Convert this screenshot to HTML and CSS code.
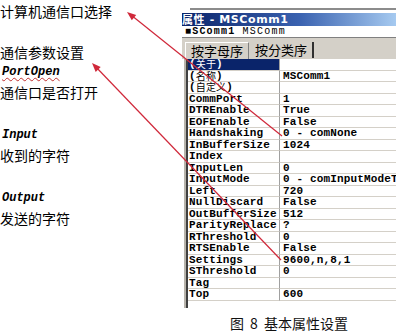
FILE: index.html
```html
<!DOCTYPE html>
<html lang="zh-CN">
<head>
    <meta charset="UTF-8">
    <meta name="viewport" content="width=device-width, initial-scale=1.0">
    <title>MSComm 基本属性设置</title>
    <link rel="stylesheet" href="styles.css">
</head>
<body>
    <div class="page">
        <!-- Notes on the left -->
        <div class="notes">
            <p class="cn first">计算机通信口选择</p>
            <div class="group">
                <p class="cn">通信参数设置</p>
                <p class="en spell">PortOpen</p>
                <p class="cn">通信口是否打开</p>
            </div>
            <div class="group">
                <p class="en">Input</p>
                <p class="cn">收到的字符</p>
            </div>
            <div class="group">
                <p class="en">Output</p>
                <p class="cn">发送的字符</p>
            </div>
        </div>

        <!-- Properties window (screenshot) -->
        <div class="panel">
            <div class="frame-top"></div>
            <div class="titlebar"><span class="title-cjk">属性</span> - MSComm1</div>
            <div class="objname"><b>■SComm1</b> MSComm</div>
            <div class="tabs">
                <span class="tab active">按字母序</span>
                <span class="tab last">按分类序</span>
            </div>
            <div class="grid">
                <div class="name selected">(<span class="cjk">关于</span>)</div><div class="value"></div>
                <div class="name">(<span class="cjk">名称</span>)</div><div class="value">MSComm1</div>
                <div class="name">(<span class="cjk">自定义</span>)</div><div class="value"></div>
                <div class="name">CommPort</div><div class="value">1</div>
                <div class="name">DTREnable</div><div class="value">True</div>
                <div class="name">EOFEnable</div><div class="value">False</div>
                <div class="name">Handshaking</div><div class="value">0 - comNone</div>
                <div class="name">InBufferSize</div><div class="value">1024</div>
                <div class="name">Index</div><div class="value"></div>
                <div class="name">InputLen</div><div class="value">0</div>
                <div class="name">InputMode</div><div class="value">0 - comInputModeText</div>
                <div class="name">Left</div><div class="value">720</div>
                <div class="name">NullDiscard</div><div class="value">False</div>
                <div class="name">OutBufferSize</div><div class="value">512</div>
                <div class="name">ParityReplace</div><div class="value">?</div>
                <div class="name">RThreshold</div><div class="value">0</div>
                <div class="name">RTSEnable</div><div class="value">False</div>
                <div class="name">Settings</div><div class="value">9600,n,8,1</div>
                <div class="name">SThreshold</div><div class="value">0</div>
                <div class="name">Tag</div><div class="value"></div>
                <div class="name">Top</div><div class="value">600</div>
            </div>
            <p class="caption">图 8 基本属性设置</p>
        </div>

        <!-- red arrows drawn over everything -->
        <svg class="arrows" width="396" height="333" viewBox="0 0 396 333">
            <line x1="282" y1="136" x2="131" y2="15" />
            <polygon points="127,12 136.2,14.9 131.8,20.3" />
            <line x1="281" y1="260" x2="95" y2="66" />
            <polygon points="92,63 100.7,67.1 95.7,71.9" />
        </svg>
    </div>
</body>
</html>
```

FILE: styles.css
```css
body {
    margin: 0;
    background-color: white;
    color: #000;
    font-family: "Noto Sans CJK SC", sans-serif;
    overflow: hidden;
}

.page {
    position: relative;
    display: flex;
    width: 396px;
    height: 333px;
    overflow: hidden;
}

/* left notes */
.notes {
    width: 181px;
    flex-shrink: 0;
}

.notes p {
    margin: 0;
    line-height: 20px;
    white-space: nowrap;
}

.cn {
    font-size: 14px;
}

.first {
    margin-top: 1px !important;
}

.group {
    margin-top: 21px;
}

.group + .group {
    margin-top: 23px;
}

.en {
    font-family: "Liberation Mono", monospace;
    font-size: 12px;
    font-weight: bold;
    font-style: italic;
    padding-left: 2px;
}

.spell {
    text-decoration: underline wavy #c03030 1px;
    text-underline-offset: 2px;
}

/* properties window */
.panel {
    flex: 1;
    overflow: hidden;
    padding-left: 1px;
}

.frame-top {
    height: 8px;
    margin-left: 8px;
    border-bottom: 2px solid #8c8c8c;
    margin-bottom: 3px;
}

.titlebar {
    height: 13px;
    line-height: 13px;
    background: linear-gradient(to right, #0a246a, #3a62b0 55%, #a6caf0);
    color: white;
    font-family: "DejaVu Sans", sans-serif;
    font-size: 11px;
    font-weight: bold;
    letter-spacing: 0.6px;
    white-space: nowrap;
    overflow: hidden;
}

.title-cjk {
    font-family: "Noto Sans CJK SC", sans-serif;
    font-size: 11px;
    display: inline-block;
    height: 13px;
    line-height: 13px;
    vertical-align: top;
}

.objname {
    height: 11px;
    line-height: 11px;
    font-family: "Liberation Mono", monospace;
    font-size: 10px;
    letter-spacing: 1.2px;
    padding-left: 3px;
    white-space: nowrap;
}

.tabs {
    border-top: 1px solid #808080;
    background-color: #d4d0c8;
    padding: 4px 0 0 3px;
    box-sizing: border-box;
    display: flex;
    align-items: flex-start;
    height: 22px;
}

.tab {
    font-size: 13px;
    line-height: 16px;
    height: 16px;
    padding: 0 5px;
    border-right: 1px solid #808080;
    border-left: 1px solid #d4d0c8;
}

.tab.active {
    border-left: 1px solid white;
    border-top: 1px solid white;
    line-height: 15px;
}

.tab.last {
    border-right: 2px solid #303030;
}

.grid {
    display: grid;
    grid-template-columns: 92px 1fr;
    grid-auto-rows: 11.5px;
    margin-left: 4px;
    border-left: 2px solid #404040;
    box-shadow: -2px 0 0 #b8b4ac;
    padding-bottom: 7px;
    font-family: "Liberation Mono", monospace;
    font-size: 11px;
    font-weight: bold;
    letter-spacing: 0.15px;
}

.name,
.value {
    box-sizing: border-box;
    border-bottom: 1px solid #d4d0c8;
    line-height: 10.5px;
    white-space: nowrap;
    overflow: hidden;
}

.name {
    padding-left: 1px;
    border-right: 1px solid #a0a0a0;
}

.value {
    padding-left: 3px;
}

.name.selected {
    background-color: #0a246a;
    color: white;
}

.cjk {
    display: inline-block;
    height: 10px;
    line-height: 10px;
    vertical-align: top;
    font-family: "Noto Sans CJK SC", sans-serif;
    font-size: 10px;
    font-weight: normal;
}

.caption {
    margin: 6px 0 0 0;
    text-align: center;
    font-size: 14px;
    line-height: 18px;
    word-spacing: 3px;
    color: #111;
}

.arrows {
    position: absolute;
    top: 0;
    left: 0;
    pointer-events: none;
}

.arrows line {
    stroke: #d0283a;
    stroke-width: 1.2;
}

.arrows polygon {
    fill: #d0283a;
}
```
